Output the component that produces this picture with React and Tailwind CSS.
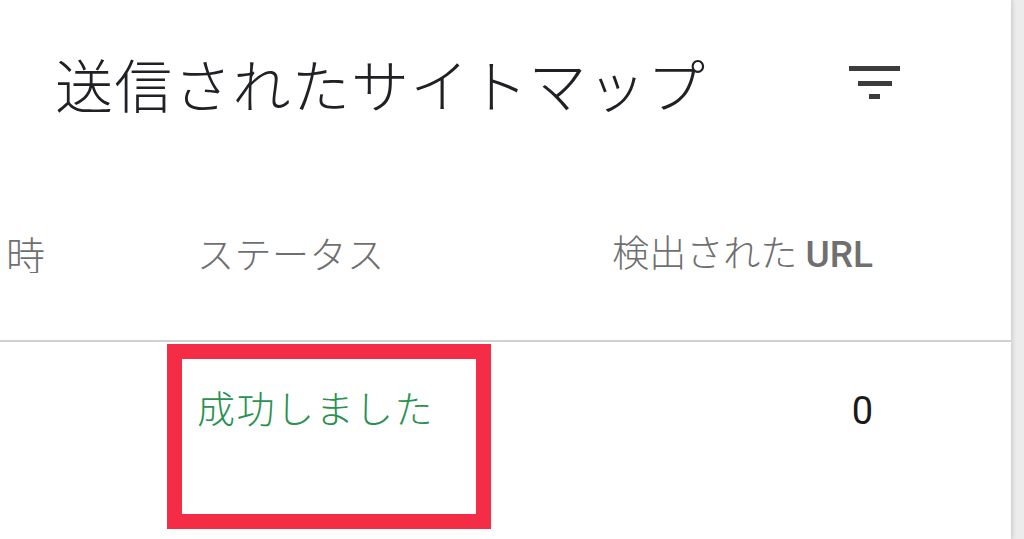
import React from "react";

const jp = "font-['Noto_Sans_CJK_JP','Noto_Sans',sans-serif]";

const FilterIcon = () => (
  <svg width="52" height="34" viewBox="0 0 52 34" aria-hidden="true">
    <rect x="0" y="0" width="51" height="5" fill="#3c3c3c" />
    <rect x="9" y="15" width="34" height="5" fill="#3c3c3c" />
    <rect x="20" y="28" width="11" height="5" fill="#3c3c3c" />
  </svg>
);

const App = () => {
  return (
    <div className={`flex w-[1024px] h-[539px] overflow-hidden bg-[#ececec] ${jp}`}>
      <div className="w-[1012px] h-full bg-white border-r border-[#d6d6d6] shadow-[1px_0_4px_rgba(0,0,0,0.12)] overflow-hidden">
        {/* Title */}
        <div className="flex items-center h-[166px] pl-[55px]">
          <h1 className="text-[58px] font-light leading-none text-[#202124] tracking-[1.2px] w-[794px]">
            送信されたサイトマップ
          </h1>
          <FilterIcon />
        </div>

        {/* Header row */}
        <div className="flex items-center h-[174px] text-[37px] font-light leading-none text-[#6f6f6f]">
          <div className="w-[167px] overflow-hidden">
            <span className="block ml-[-33px] text-[39px] whitespace-nowrap">日時</span>
          </div>
          <div className="w-[324px] pl-[30px] tracking-[0.5px]">ステータス</div>
          <div className="w-[382px] text-right whitespace-nowrap">
            検出された <span className="font-['Roboto',sans-serif] font-medium">URL</span>
          </div>
        </div>

        <div className="h-[2px] bg-[#d2d2d2]" />

        {/* Body row */}
        <div className="flex items-start pt-[2px]">
          <div className="w-[167px]" />
          <div className="w-[324px] h-[185px] border-[15px] border-[#f52c45] pl-[15px] pt-[29px]">
            <span className="text-[38px] font-light leading-none tracking-[1.5px] text-[#2a9250]">成功しました</span>
          </div>
          <div className="w-[382px] pt-[48px] text-right text-[38px] leading-none text-[#1a1a1a] font-['Roboto',sans-serif]">
            0
          </div>
        </div>
      </div>
    </div>
  );
};

export default App;
